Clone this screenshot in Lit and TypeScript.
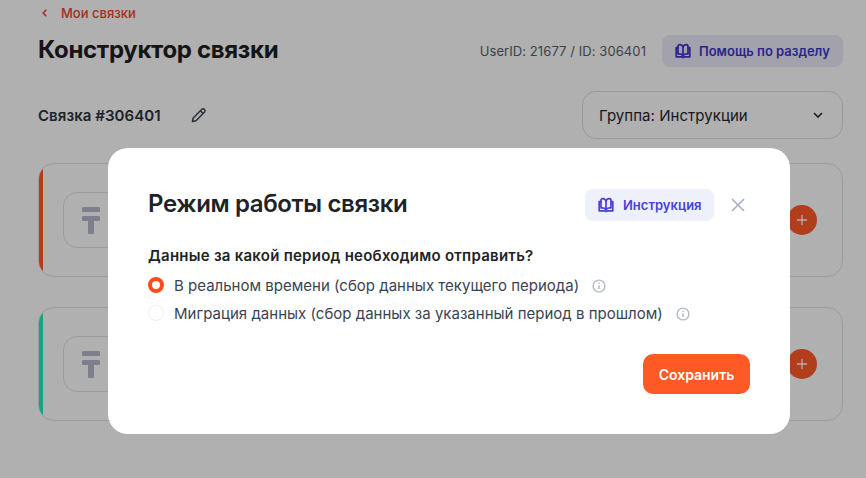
import { LitElement, html, css, svg } from "lit";
import { customElement } from "lit/decorators.js";

const book = (cls: string) => html`<svg class=${cls} viewBox="0 0 16 16" fill="none" stroke="currentColor" stroke-width="1.7" stroke-linejoin="round" stroke-linecap="round">
  <path d="M8 4C7.4 2.4 6.2 1.6 4.8 1.6C3.7 1.6 3 2.4 3 3.4V11C4.9 10.8 6.9 11.2 8 12.6C9.1 11.2 11.1 10.8 13 11V3.4C13 2.4 12.3 1.6 11.2 1.6C9.8 1.6 8.6 2.4 8 4Z"/>
  <path d="M8 4V12.6"/>
  <path d="M3 4.6H1.2V13.8H6.4L8 14.6L9.6 13.8H14.8V4.6H13"/>
</svg>`;

const info = html`<svg class="info" viewBox="0 0 14 14" fill="none" stroke="currentColor">
  <circle cx="7" cy="7" r="5.9" stroke-width="1.4"/>
  <path d="M7 6.2V10" stroke-width="1.5"/><path d="M7 3.8V5" stroke-width="1.5"/>
</svg>`;

const tenge = svg`<rect x="0" y="0" width="18" height="5" rx="1.2" fill="currentColor"/><rect x="0" y="9" width="18" height="5" rx="1.2" fill="currentColor"/><rect x="6" y="10" width="6" height="17" rx="1" fill="currentColor"/>`;

@customElement("app-root")
export class AppRoot extends LitElement {
  static styles = css`
    :host { display: block; width: 866px; height: 478px; position: relative; overflow: hidden; background: #fff;
      font-family: Inter, "Noto Sans", sans-serif; color: #1c2024; }
    * { box-sizing: border-box; }
    .page { padding: 5px 23px 0 38px; display: flex; flex-direction: column; }
    .back { display: flex; align-items: center; gap: 14px; padding-left: 4px; height: 16px; color: #f0442a; font-size: 13px; font-weight: 500; }
    .back svg { width: 5px; height: 8px; }
    .head { display: flex; align-items: center; margin-top: 14px; height: 32px; }
    h1 { margin: -2px 0 0; font-size: 24px; line-height: 32px; font-weight: 700; letter-spacing: -0.32px; flex: 1; }
    .uid { font-size: 13px; letter-spacing: 0.08px; color: #56606e; margin-right: 16px; margin-top: -1px; }
    .help { display: flex; align-items: center; gap: 8px; width: 181px; height: 32px; padding-left: 13px; border-radius: 8px; background: #eaebfa; color: #4034c8; font-size: 13px; font-weight: 600; }
    .ico { width: 16px; height: 16px; flex: none; }
    .row { display: flex; align-items: center; margin-top: 24px; height: 48px; }
    .name { font-size: 15px; font-weight: 600; letter-spacing: 0.07px; color: #2b333b; }
    .pen { width: 16px; height: 16px; margin-left: 30px; color: #3f4754; }
    .spacer { flex: 1; }
    .select { width: 261px; height: 48px; border: 1px solid #dcdee2; border-radius: 14px; display: flex; align-items: center; justify-content: space-between; padding: 0 19px 0 16px; font-size: 15px; letter-spacing: 0.05px; color: #22282e; }
    .select svg { width: 10px; height: 6px; }
    .cards { display: flex; flex-direction: column; gap: 30px; margin-top: 24px; }
    .card { position: relative; height: 114px; border: 1px solid #dfe1e5; border-radius: 16px; padding: 28px 0 0 24px; }
    .stripe { position: absolute; left: 0; top: 0; bottom: 0; width: 100%; border-radius: 15px; overflow: hidden; }
    .stripe::before { content: ""; display: block; width: 4px; height: 100%; }
    .red .stripe::before { background: #ff5a26; }
    .green .stripe::before { background: #1ceebf; }
    .tile { width: 120px; height: 56px; border: 1px solid #dfe1e5; border-radius: 14px; padding: 14px 0 0 18px; color: #b6b8cc; }
    .tile svg { width: 18px; height: 27px; display: block; }
    .plus { position: absolute; right: 25px; top: 41px; width: 30px; height: 30px; border-radius: 50%; background: #ff5a26; display: flex; align-items: center; justify-content: center; color: #fff; }
    .plus svg { width: 10px; height: 10px; }
    .overlay { position: absolute; inset: 0; background: rgba(0, 0, 0, 0.31); }
    .modal { position: absolute; left: 108px; top: 148px; width: 682px; height: 286px; background: #fff; border-radius: 20px; padding: 41px 40px 0 40px; display: flex; flex-direction: column; }
    .mhead { display: flex; align-items: center; height: 32px; }
    h2 { margin: -2px 0 0; font-size: 24px; font-weight: 600; line-height: 32px; letter-spacing: -0.37px; flex: 1; color: #1f2326; }
    .instr { display: flex; align-items: center; gap: 9px; width: 129px; height: 32px; padding-left: 13px; background: #eef0fb; border-radius: 8px; color: #4a3fd8; font-size: 13px; font-weight: 600; }
    .close { width: 14px; height: 14px; margin: 0 5px 0 17px; color: #a9b0bd; }
    .q { margin-top: 25px; font-size: 15px; line-height: 20px; font-weight: 600; letter-spacing: 0.25px; color: #1f2326; }
    .opts { display: flex; flex-direction: column; gap: 8px; margin-top: 9px; }
    .opt { display: flex; align-items: center; height: 20px; font-size: 15px; letter-spacing: 0.01px; color: #3a4450; }
    .radio { width: 16px; height: 16px; border-radius: 50%; border: 1px solid #eceef1; margin-right: 10px; flex: none; }
    .radio.on { border: 4.5px solid #ff4a1c; background: #fff; }
    .info { width: 14px; height: 14px; margin-left: 13px; margin-top: 1px; color: #b4bac4; flex: none; }
    .foot { display: flex; justify-content: flex-end; margin-top: 31px; }
    .save { width: 107px; height: 40px; border-radius: 10px; background: #ff5a26; color: #fff; display: flex; align-items: center; justify-content: center; font-size: 14px; font-weight: 600; }
  `;

  private card(cls: string) {
    return html`<div class="card ${cls}">
      <div class="stripe"></div>
      <div class="tile"><svg viewBox="0 0 18 27">${tenge}</svg></div>
      <div class="plus"><svg viewBox="0 0 10 10" fill="none" stroke="currentColor" stroke-width="1.3"><path d="M5 0V10M0 5H10"/></svg></div>
    </div>`;
  }

  render() {
    return html`
      <div class="page">
        <div class="back">
          <svg viewBox="0 0 5 8" fill="none" stroke="currentColor" stroke-width="1.6"><path d="M4.3 .8L1.2 4L4.3 7.2"/></svg>
          Мои связки
        </div>
        <div class="head">
          <h1>Конструктор связки</h1>
          <span class="uid">UserID: 21677 / ID: 306401</span>
          <div class="help">${book("ico")}Помощь по разделу</div>
        </div>
        <div class="row">
          <span class="name">Связка #306401</span>
          <svg class="pen" viewBox="0 0 16 16" fill="none" stroke="currentColor" stroke-width="1.5" stroke-linejoin="round"><path d="M1.4 14.6L2.2 11L10.6 2.4C11.4 1.6 12.6 1.6 13.4 2.4C14.2 3.2 14.2 4.4 13.4 5.2L5 13.8L1.4 14.6Z"/><path d="M9.4 3.8L12 6.4"/></svg>
          <div class="spacer"></div>
          <div class="select">Группа: Инструкции
            <svg viewBox="0 0 10 6" fill="none" stroke="currentColor" stroke-width="1.6"><path d="M1 1L5 5L9 1"/></svg>
          </div>
        </div>
        <div class="cards">${this.card("red")}${this.card("green")}</div>
      </div>
      <div class="overlay"></div>
      <div class="modal">
        <div class="mhead">
          <h2>Режим работы связки</h2>
          <div class="instr">${book("ico")}Инструкция</div>
          <svg class="close" viewBox="0 0 14 14" fill="none" stroke="currentColor" stroke-width="1.6"><path d="M1 1L13 13M13 1L1 13"/></svg>
        </div>
        <div class="q">Данные за какой период необходимо отправить?</div>
        <div class="opts">
          <div class="opt"><span class="radio on"></span>В реальном времени (сбор данных текущего периода)${info}</div>
          <div class="opt"><span class="radio"></span>Миграция данных (сбор данных за указанный период в прошлом)${info}</div>
        </div>
        <div class="foot"><div class="save">Сохранить</div></div>
      </div>
    `;
  }
}
